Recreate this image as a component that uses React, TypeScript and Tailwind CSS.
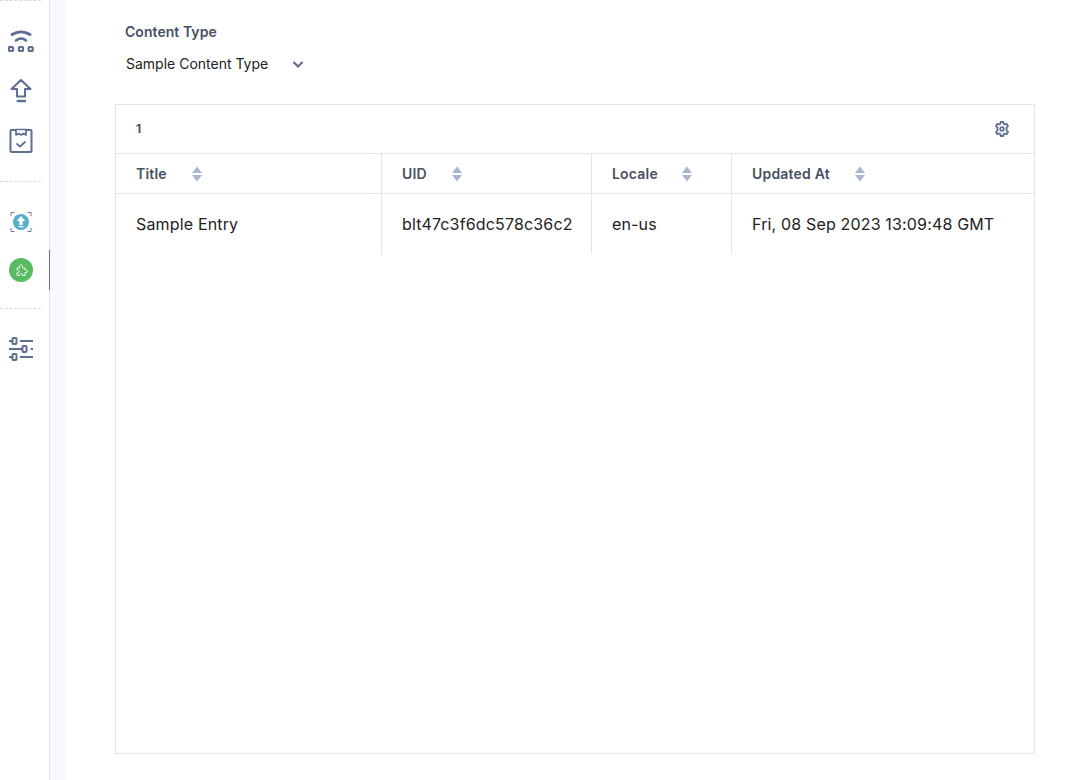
const font = { fontFamily: "Inter, 'Noto Sans', sans-serif" };

function Divider({ className = "" }: { className?: string }) {
  return <div className={"w-[41px] border-t border-dashed border-[#d5d9e5] " + className} />;
}

function WifiIcon() {
  return (
    <svg width="26" height="25" viewBox="0 0 26 25" fill="none" stroke="#5d6f92">
      <path d="M4 6.5C9.5 3 16.5 3 22 6.5" strokeWidth="3" strokeLinecap="round" />
      <path d="M8 12.5C11 10 15 10 18 12.5" strokeWidth="2.6" strokeLinecap="round" />
      <rect x="1" y="19" width="4" height="4" rx="0.8" strokeWidth="2.2" />
      <rect x="11" y="19" width="4" height="4" rx="0.8" strokeWidth="2.2" />
      <rect x="20.7" y="19" width="4" height="4" rx="0.8" strokeWidth="2.2" />
    </svg>
  );
}

function UploadIcon() {
  return (
    <svg width="22" height="26" viewBox="0 0 22 26" fill="none" stroke="#5d6f92" strokeWidth="2" strokeLinejoin="round">
      <path d="M11 2L1.5 11H7V18.5H15V11H20.5L11 2Z" />
      <path d="M6.7 23H16" strokeWidth="2.4" />
    </svg>
  );
}

function ClipboardIcon() {
  return (
    <svg width="24" height="26" viewBox="0 0 24 26" fill="none" stroke="#5d6f92" strokeWidth="2" strokeLinejoin="round">
      <path d="M7 2H2.5C1.9 2 1.5 2.4 1.5 3V23C1.5 23.6 1.9 24 2.5 24H21.5C22.1 24 22.5 23.6 22.5 23V3C22.5 2.4 22.1 2 21.5 2H17" />
      <path d="M7 1.5V7L9.5 5.5L12 7L14.5 5.5L17 7V1.5H7Z" strokeWidth="1.7" />
      <path d="M8 16L11 18.5L16 14" strokeLinecap="round" strokeWidth="1.7" />
    </svg>
  );
}

function ScanUploadIcon() {
  return (
    <svg width="22" height="22" viewBox="0 0 22 22" fill="none">
      <path d="M1 5V1.5H4.5M17.5 1.5H21V5M21 17V20.5H17.5M4.5 20.5H1V17" stroke="#6c7a93" strokeWidth="1" />
      <circle cx="11" cy="11" r="8" fill="#55add0" />
      <path d="M11 5L15.3 10H12.8V14H9.2V10H6.7L11 5Z" fill="#ffffff" />
      <rect x="8.5" y="15" width="5" height="1.3" fill="#ffffff" />
    </svg>
  );
}

function PuzzleIcon() {
  return (
    <div className="flex h-6 w-6 items-center justify-center rounded-full bg-[#58bb5f]">
      <svg width="13" height="13" viewBox="0 0 13 13" fill="none" stroke="#ffffff" strokeWidth="0.9" strokeLinejoin="round">
        <path d="M2 4H4.5C4 2 5 1 6 1C7.2 1 8 2 7.5 4H10V6C11.5 5.5 12.5 6.2 12.5 7.3C12.5 8.4 11.5 9 10 8.6V11.5H7.5C8 10.3 7 9.6 6 9.6C5 9.6 4 10.3 4.5 11.5H2V8.6C3 9 4 8.4 4 7.3C4 6.3 3 5.7 2 6V4Z" />
      </svg>
    </div>
  );
}

function SlidersIcon() {
  return (
    <svg width="24" height="24" viewBox="0 0 24 24" fill="none" stroke="#5d6f92" strokeWidth="2">
      <path d="M0 4H3M11 4H24" />
      <rect x="3.5" y="1" width="4" height="6" rx="0.8" />
      <path d="M0 12H13M21.7 12H24" />
      <rect x="13.5" y="9" width="4" height="6" rx="0.8" />
      <path d="M0 20H3M11 20H24" />
      <rect x="3.5" y="17" width="4" height="6" rx="0.8" />
    </svg>
  );
}

function SortIcon() {
  return (
    <svg width="10" height="16" viewBox="0 0 10 16" className="shrink-0">
      <path d="M5 0.5L10 7H0L5 0.5Z" fill="#a9b6cf" />
      <path d="M5 15.5L0 9H10L5 15.5Z" fill="#a9b6cf" />
    </svg>
  );
}

function GearIcon() {
  return (
    <svg width="16" height="16" viewBox="0 0 16 16" fill="none" stroke="#5d6f92" strokeWidth="1.8" strokeLinejoin="round" className="mb-[1px]">
      <path d="M6.7 1H9.3L9.7 2.9L10.9 3.5L12.7 2.8L14 5L12.6 6.3V9.7L14 11L12.7 13.2L10.9 12.5L9.7 13.1L9.3 15H6.7L6.3 13.1L5.1 12.5L3.3 13.2L2 11L3.4 9.7V6.3L2 5L3.3 2.8L5.1 3.5L6.3 2.9L6.7 1Z" />
      <circle cx="8" cy="8" r="1.8" />
    </svg>
  );
}

const columns = [
  { title: "Title", value: "Sample Entry", width: "w-[266px]", gap: "w-[56px]" },
  { title: "UID", value: "blt47c3f6dc578c36c2", width: "w-[210px]", gap: "w-[50px]" },
  { title: "Locale", value: "en-us", width: "w-[140px]", gap: "w-[70px]" },
  { title: "Updated At", value: "Fri, 08 Sep 2023 13:09:48 GMT", width: "flex-1", gap: "w-[103px]" },
];

export default function App() {
  return (
    <div style={font} className="flex h-[780px] w-[1088px] overflow-hidden bg-white">
      <aside className="relative flex w-[50px] shrink-0 flex-col border-r border-[#e3e6ef]">
        <Divider />
        <div className="ml-[8px] mt-[27px]"><WifiIcon /></div>
        <div className="ml-[10px] mt-[25px]"><UploadIcon /></div>
        <div className="ml-[9px] mt-[24px]"><ClipboardIcon /></div>
        <Divider className="mt-[27px]" />
        <div className="ml-[10px] mt-[29px]"><ScanUploadIcon /></div>
        <div className="ml-[9px] mt-[25px]"><PuzzleIcon /></div>
        <Divider className="mt-[26px]" />
        <div className="ml-[9px] mt-[28px]"><SlidersIcon /></div>
        <div className="absolute right-[-1px] top-[250px] h-[40px] w-px bg-[#6c5ce7]" />
      </aside>
      <div className="w-[15px] shrink-0 bg-[#f7f9fd]" />
      <main className="flex min-w-0 flex-1 flex-col pl-[50px] pr-[53px]">
        <div className="pl-[10px] pt-[24px] text-[14px] font-semibold leading-[16px] tracking-[0.05px] text-[#475161]">Content Type</div>
        <div className="flex items-center pl-[11px] pt-[8px] leading-[32px]">
          <span className="text-[14px] text-[#222222]">Sample Content Type</span>
          <svg width="14" height="14" viewBox="0 0 14 14" fill="none" stroke="#5d6f92" strokeWidth="2.2" className="ml-[23px]">
            <path d="M2.5 5L7 9.5L11.5 5" />
          </svg>
        </div>
        <div className="mt-[24px] flex h-[650px] w-[920px] flex-col border border-[#e0e4ee]">
          <div className="flex h-[48px] items-center justify-between pl-[20px] pr-[24px]">
            <span className="text-[12px] font-bold text-[#475161]">1</span>
            <GearIcon />
          </div>
          <div className="flex h-[41px] border-y border-[#e0e4ee]">
            {columns.map((c, i) => (
              <div key={c.title} className={"flex items-center pl-[20px] " + c.width + (i < 3 ? " border-r border-[#e0e4ee]" : "")}>
                <div className={"text-[14px] font-semibold tracking-[0.2px] text-[#475161] " + c.gap}>{c.title}</div>
                <SortIcon />
              </div>
            ))}
          </div>
          <div className="flex h-[60px]">
            {columns.map((c, i) => (
              <div key={c.title} className={"flex items-center pl-[20px] text-[16px] tracking-[0.16px] text-[#222222] " + c.width + (i < 3 ? " border-r border-[#e0e4ee]" : "")}>
                {c.value}
              </div>
            ))}
          </div>
        </div>
      </main>
    </div>
  );
}
